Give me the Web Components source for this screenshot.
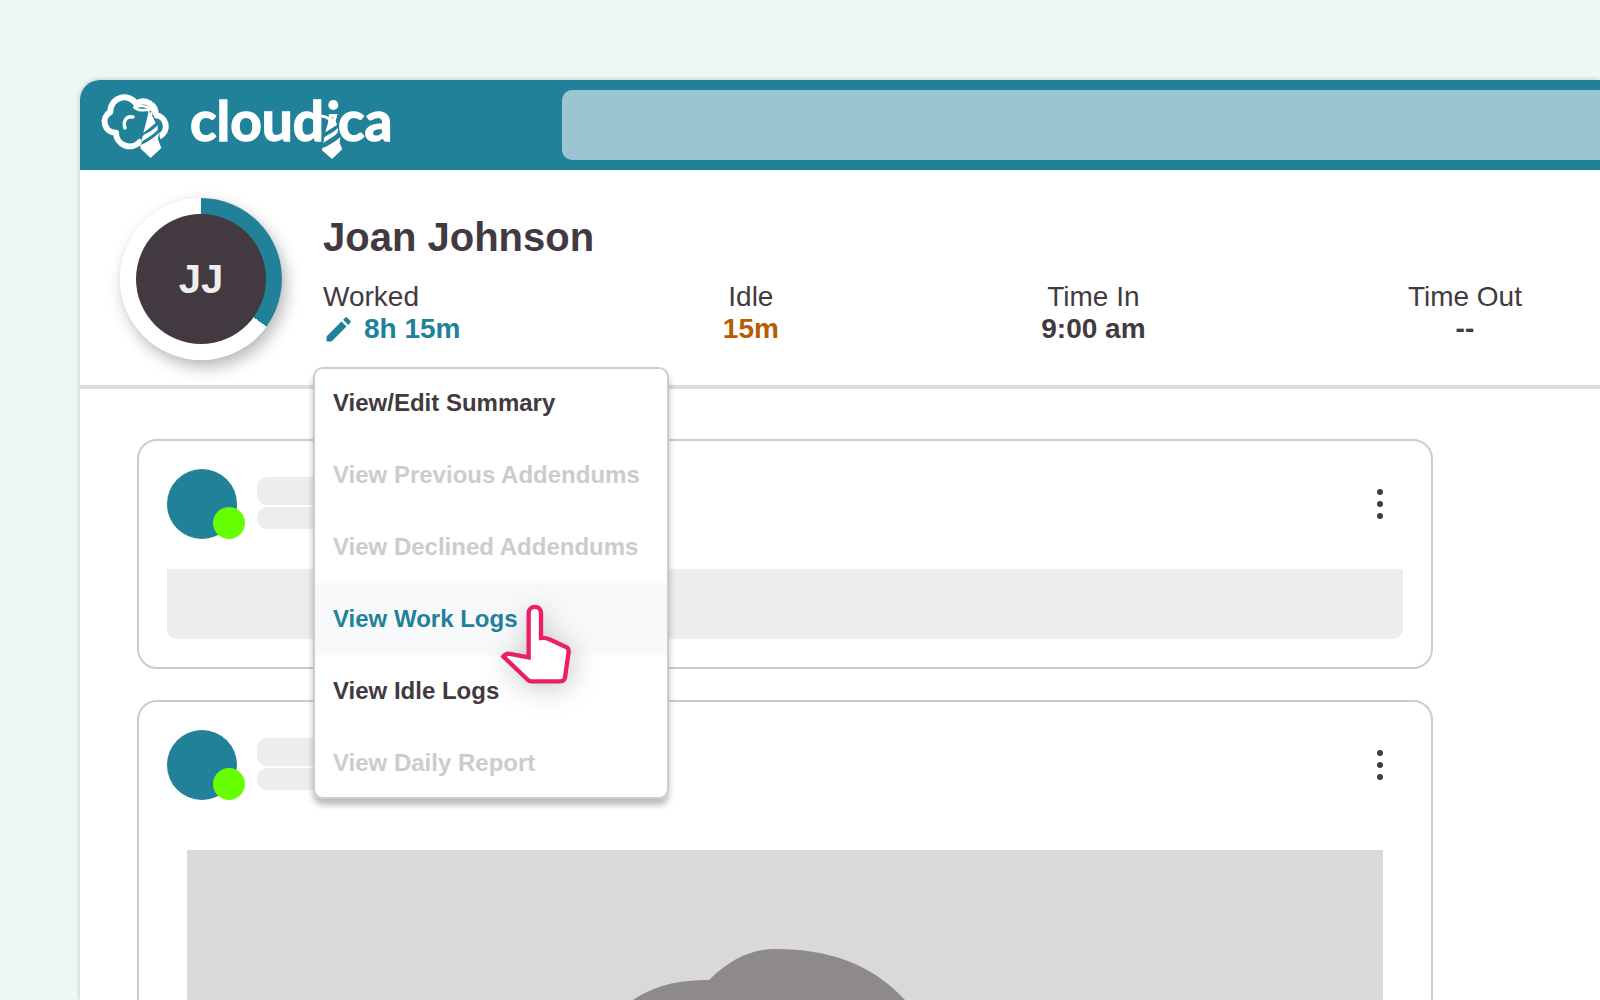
<!DOCTYPE html>
<html lang="en">
<head>
<meta charset="utf-8">
<title>Cloudica</title>
<style>
  :root {
    --teal: #218199;
    --ink: #423a40;
    --line: #cccccc;
    --block: #ededed;
  }
  html, body { height: 100%; margin: 0; }
  body {
    background: #eef7f6;
    color: var(--ink);
    font-family: "Liberation Sans", Arial, sans-serif;
    overflow: hidden;
  }
</style>
</head>
<body>
<app-window>
  <app-bar slot="bar"></app-bar>
  <profile-header name="Joan Johnson" initials="JJ" progress="35">
    <profile-stat label="Worked" tone="teal" editable>
      8h 15m
      <action-menu slot="menu">
        <menu-item>View/Edit Summary</menu-item>
        <menu-item disabled>View Previous Addendums</menu-item>
        <menu-item disabled>View Declined Addendums</menu-item>
        <menu-item active>View Work Logs</menu-item>
        <menu-item>View Idle Logs</menu-item>
        <menu-item disabled>View Daily Report</menu-item>
      </action-menu>
    </profile-stat>
    <profile-stat label="Idle" tone="amber">15m</profile-stat>
    <profile-stat label="Time In">9:00 am</profile-stat>
    <profile-stat label="Time Out">--</profile-stat>
  </profile-header>
  <post-feed>
    <post-card></post-card>
    <post-card><post-picture></post-picture></post-card>
  </post-feed>
</app-window>

<script>
function define(name, template, setup) {
  customElements.define(name, class extends HTMLElement {
    constructor() {
      super()
      this.attachShadow({ mode: 'open' })
    }

    connectedCallback() {
      this.shadowRoot.innerHTML = template(this)
      if (setup) setup(this)
    }
  })
}

define('app-window', () => `
  <style>
    :host { display: block; height: 100%; box-sizing: border-box; padding: 80px 0 0 80px; }
    .window {
      height: 100%;
      overflow: clip;
      overflow-clip-margin: 8px;
      background: #fff;
      border-radius: 20px 0 0 0;
      box-shadow: 0 0 5px rgba(0,0,0,0.22);
    }
  </style>
  <div class="window">
    <slot name="bar"></slot>
    <slot></slot>
  </div>
`)

define('app-bar', () => `
  <style>
    :host {
      display: flex;
      align-items: center;
      gap: 162px;
      height: 90px;
      padding-left: 20px;
      background: var(--teal);
      border-radius: 20px 0 0 0;
    }
    brand-logo { flex: none; }
    input {
      flex: 1;
      min-width: 0;
      height: 70px;
      box-sizing: border-box;
      padding: 0 20px;
      border: 0;
      border-radius: 10px 0 0 10px;
      background: #9bc5d1;
      font: 28px "Liberation Sans", Arial, sans-serif;
    }
  </style>
  <brand-logo></brand-logo>
  <input type="search" aria-label="Search">
`)

define('brand-logo', () => `
  <style>
    :host { display: block; }
    svg { display: block; overflow: visible; }
    text { font: 700 55px Lato, sans-serif; fill: #fff; stroke: #fff; stroke-width: 1.4; }
    .gap { fill: var(--teal); stroke: var(--teal); stroke-width: 4; }
    .tie { fill: #fff; }
    .stroke { fill: none; stroke: #fff; stroke-linecap: round; stroke-linejoin: round; }
  </style>
  <svg width="300" height="70" viewBox="0 0 300 70" role="img" aria-label="cloudica">
    <text x="90" y="51">cloudica</text>
    <g transform="scale(0.33333) translate(-90 -60)">
      <path class="stroke" stroke-width="18" d="M209 216 A41 41 0 0 1 138 188 A33 33 0 0 1 121 126 A42 42 0 0 1 198 101 A38 38 0 0 1 257 136 A33 33 0 0 1 270 198"/>
      <path class="stroke" stroke-width="10" d="M165 174 C158 152 170 137 189 141"/>
      <path class="gap" d="M229 128 L250 138 L254 160 L264 174 L270 222 L242 250 L216 228 L218 193 L226 182Z"/>
      <path class="stroke" stroke-width="8" d="M193 112 C204 104 228 108 242 116 C226 122 207 123 193 112Z"/>
      <path class="tie" d="M232 113 L250 119 L246 136 L257 159 L220 189 L228 158 L235 130Z"/>
      <path class="tie" d="M218 198 C230 189 247 184 263 166 L263 180 C250 194 232 203 214 216Z"/>
      <path class="tie" d="M211 226 C232 216 252 204 267 188 L264 208 L274 234 L242 264 L212 236Z"/>
      <rect x="759" y="80" width="48" height="150" fill="var(--teal)"/>
      <circle cx="790" cy="105" r="15" fill="#fff"/>
      <path class="stroke" stroke-width="8" d="M748 139 C758 137 768 139 778 148"/>
      <path class="tie" d="M777 132 L803 132 L797 152 L801 165 L766 187 L774 158Z"/>
      <path class="tie" d="M763 202 C775 193 790 188 804 174 L803 188 C791 202 774 207 760 219Z"/>
      <path class="tie" d="M756 235 C775 228 795 216 811 202 L809 220 L817 238 L786 267 L756 241Z"/>
      <circle cx="788" cy="143" r="2" fill="var(--teal)"/>
      <circle cx="241" cy="125" r="3" fill="var(--teal)"/>
    </g>
  </svg>
`)

define('profile-header', el => `
  <style>
    :host {
      position: relative;
      z-index: 1;
      display: flex;
      gap: 41px;
      padding: 28px 78px 25px 40px;
      border-bottom: 4px solid #dcdcdc;
    }
    .ring {
      flex: none;
      display: grid;
      place-items: center;
      width: 162px;
      height: 162px;
      border-radius: 50%;
      background: conic-gradient(var(--teal) ${el.getAttribute('progress')}%, #fff 0);
      box-shadow: 4px 7px 16px rgba(0,0,0,0.28), 0 0 4px rgba(0,0,0,0.04);
    }
    .avatar {
      display: grid;
      place-items: center;
      width: 130px;
      height: 130px;
      border-radius: 50%;
      background: var(--ink);
      color: #eee;
      font-size: 40px;
      font-weight: 700;
    }
    .details { flex: 1; padding-top: 19px; }
    h1 { margin: 0 0 24px; font-size: 40px; line-height: 40px; }
    .stats { display: flex; justify-content: space-between; }
  </style>
  <div class="ring"><div class="avatar">${el.getAttribute('initials')}</div></div>
  <div class="details">
    <h1>${el.getAttribute('name')}</h1>
    <div class="stats"><slot></slot></div>
  </div>
`)

define('profile-stat', el => {
  const editable = el.hasAttribute('editable')
  const pencil = `
    <svg width="34" height="34" viewBox="0 0 24 24" aria-hidden="true">
      <path fill="currentColor" d="M2.500 17.600c0-.3.1-.5.3-.7L13 6.700l3.600 3.600L6.400 20.500c-.2.2-.5.3-.8.300H2.500zM14.200 5.500l1.500-1.500c.4-.4 1-.4 1.400 0l2.200 2.200c.4.4.4 1 0 1.400l-1.500 1.500z"/>
    </svg>`
  return `
  <style>
    :host {
      position: relative;
      display: block;
      font-size: 28px;
      line-height: 32px;
      text-align: ${editable ? 'left' : 'center'};
    }
    .value, button {
      display: flex;
      align-items: center;
      justify-content: center;
      gap: 7px;
      height: 32px;
      font-weight: 700;
    }
    button {
      padding: 0;
      border: 0;
      background: none;
      color: inherit;
      font-family: inherit;
      font-size: inherit;
      cursor: pointer;
    }
    :host([tone="teal"]) button { color: var(--teal); }
    :host([tone="amber"]) .value { color: #b75c00; }
  </style>
  <div>${el.getAttribute('label')}</div>
  ${editable
    ? `<button type="button" aria-haspopup="menu">${pencil}<span><slot></slot></span></button>`
    : '<div class="value"><span><slot></slot></span></div>'}
  <slot name="menu"></slot>
`
}, el => {
  const button = el.shadowRoot.querySelector('button')
  const menu = el.querySelector('action-menu')
  if (button && menu) button.addEventListener('click', () => { menu.hidden = !menu.hidden })
})

define('action-menu', () => `
  <style>
    :host {
      position: absolute;
      top: calc(100% + 22px);
      left: -10px;
      z-index: 5;
      display: block;
      box-sizing: border-box;
      min-width: 356px;
      padding: 0 2px;
      border-radius: 10px;
      background: #fff;
      box-shadow: inset 0 0 0 2px var(--line), 0 6px 6px rgba(0,0,0,0.27);
    }
    :host([hidden]) { display: none; }
    /* pointer sits on the hovered row */
    .pointer {
      position: absolute;
      top: 236px;
      left: 187px;
      overflow: visible;
      pointer-events: none;
      filter: drop-shadow(2px 4px 14px rgba(0,0,0,0.22));
    }
  </style>
  <div role="menu"><slot></slot></div>
  <svg class="pointer" width="72" height="82" viewBox="600 130 216 246" aria-hidden="true">
    <path fill="#fff" stroke="#eb1f64" stroke-width="13" d="M723 235 V160 A18.500 18.500 0 0 0 686 160 V293 L630 283 Q619 280 610 291 L684 361 Q688 365 694 365 H781 Q793 365 795 354 L806 276 Q807 267 800 263 L748 239 Q738 234 723 235Z"/>
  </svg>
`)

define('menu-item', el => `
  <style>
    :host { display: block; }
    button {
      display: block;
      width: 100%;
      height: 72px;
      padding: 0 18px;
      border: 0;
      background: none;
      color: var(--ink);
      font: 700 24px/24px "Liberation Sans", Arial, sans-serif;
      text-align: left;
      white-space: nowrap;
      cursor: pointer;
    }
    button:disabled { color: #ccc; cursor: default; }
    :host([active]) button { background: #f8f9fb; color: var(--teal); }
  </style>
  <button type="button" role="menuitem" ${el.hasAttribute('disabled') ? 'disabled' : ''}><slot></slot></button>
`)

define('post-feed', () => `
  <style>
    :host {
      display: flex;
      flex-direction: column;
      gap: 31px;
      padding: 50px 167px 0 57px;
    }
  </style>
  <slot></slot>
`)

define('post-card', () => `
  <style>
    :host {
      display: block;
      padding: 28px;
      border: 2px solid var(--line);
      border-radius: 20px;
    }
    header { display: flex; align-items: center; gap: 20px; height: 70px; margin-bottom: 30px; }
    .avatar {
      position: relative;
      width: 70px;
      height: 70px;
      border-radius: 50%;
      background: var(--teal);
    }
    .status {
      position: absolute;
      right: -8px;
      bottom: 0;
      width: 32px;
      height: 32px;
      border-radius: 50%;
      background: #66ff00;
    }
    .lines { display: grid; gap: 2px; width: 240px; padding-bottom: 2px; }
    .lines i { height: 28px; border-radius: 10px; background: var(--block); }
    .lines i + i { height: 22px; }
    button {
      margin-left: auto;
      width: 46px;
      height: 46px;
      padding: 0;
      border: 0;
      background: none;
      color: var(--ink);
      cursor: pointer;
    }
    button svg { display: block; margin: 0 auto; }
    .body { height: 70px; border-radius: 0 0 10px 10px; background: var(--block); }
  </style>
  <header>
    <div class="avatar"><span class="status"></span></div>
    <div class="lines"><i></i><i></i></div>
    <button type="button" aria-label="More options">
      <svg width="6" height="30" viewBox="0 0 6 30" fill="currentColor">
        <circle cx="3" cy="3" r="3"/><circle cx="3" cy="15" r="3"/><circle cx="3" cy="27" r="3"/>
      </svg>
    </button>
  </header>
  <slot><div class="body"></div></slot>
`)

define('post-picture', () => `
  <style>
    :host {
      display: flex;
      justify-content: center;
      margin: 50px 20px 0;
      padding: 90px 0;
      background: #d9d9d9;
    }
    svg { display: block; flex: none; }
  </style>
  <svg width="500" height="300" viewBox="0 0 500 300" aria-hidden="true">
    <path fill="#8e8a89" d="M174 40 C195 19 217 9 240 9 C294 9 337 24 370 60 C392 84 404 112 406 140 C452 150 478 180 478 216 C478 262 444 290 400 290 H100 C50 290 22 256 22 210 C22 168 46 138 78 130 C78 98 82 74 98 60 C119 46 142 40 174 40Z"/>
  </svg>
`)
</script>
</body>
</html>
